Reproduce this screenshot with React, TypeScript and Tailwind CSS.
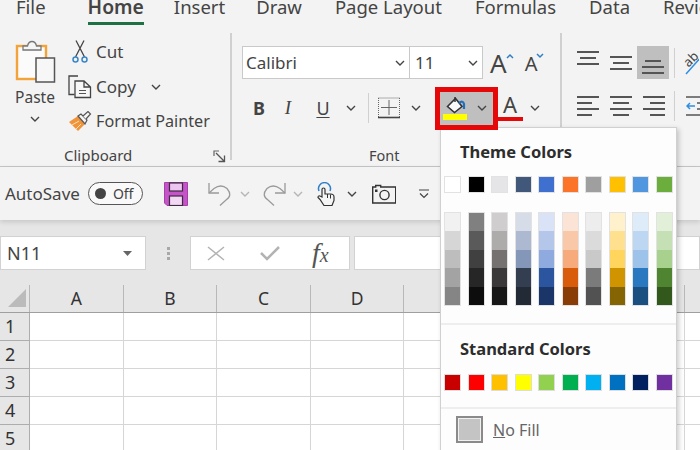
import React from 'react';

const tabs = [
  { label: 'File', cls: 'ml-[16px]' },
  { label: 'Home', cls: 'ml-[42px] text-[19.300px] font-semibold border-b-[3px] border-[#1e7145]' },
  { label: 'Insert', cls: 'ml-[30px]' },
  { label: 'Draw', cls: 'ml-[31px]' },
  { label: 'Page Layout', cls: 'ml-[33px]' },
  { label: 'Formulas', cls: 'ml-[33px]' },
  { label: 'Data', cls: 'ml-[33px]' },
  { label: 'Review', cls: 'ml-[33px]' },
];

const themeTop = ['#ffffff', '#000000', '#e5e5e7', '#42587a', '#3f70cf', '#fc7428', '#a09fa0', '#fec000', '#5097e0', '#6cae3d'];

const themeColumns = [
  ['#f1f1f1', '#d6d6d6', '#bdbdbd', '#a3a3a3', '#858585'],
  ['#808080', '#5a5a5a', '#404040', '#262626', '#0d0d0d'],
  ['#cfcdcd', '#aeabab', '#757171', '#3a3838', '#181717'],
  ['#d6dce8', '#adb9d0', '#8497b8', '#333f50', '#222a35'],
  ['#d9e2f6', '#b4c7ea', '#8faadf', '#2b559f', '#1c3568'],
  ['#fbe3d6', '#f9c8a9', '#f7ab7c', '#d85c0c', '#8a3c06'],
  ['#ededed', '#dbdbdb', '#c9c9c9', '#7b7b7b', '#525252'],
  ['#fff1cc', '#ffe08f', '#ffd55e', '#cf9400', '#856404'],
  ['#deebf9', '#bdd7f2', '#9dc3ea', '#2a78c0', '#1b4f82'],
  ['#e2f0d9', '#c5e0b4', '#a9d18e', '#4f8430', '#32591b'],
];

const standard = ['#c90000', '#ff0000', '#ffc000', '#ffff00', '#92d050', '#00b050', '#00b0f0', '#0070c0', '#002060', '#7030a0'];

const columns = ['A', 'B', 'C', 'D', '', '', '', ''];
const rows = ['1', '2', '3', '4', '5'];

const Chevron = ({ color = '#444444', className = '' }: { color?: string; className?: string }) => (
  <svg width="10" height="6" viewBox="0 0 10 6" className={className}>
    <path d="M1 1l4 4 4-4" fill="none" stroke={color} strokeWidth="1.400" />
  </svg>
);

const PasteIcon = () => (
  <svg width="42" height="44" viewBox="15 39 42 44">
    <rect x="18" y="46" width="29" height="33" fill="#fbfbfb" stroke="#f2a33a" strokeWidth="2.400" />
    <path d="M24 49v-3h4.500q1-4.500 4.500-4.500t4.500 4.500h4.500v4h-18z" fill="#f5f5f5" stroke="#777777" strokeWidth="1.300" />
    <rect x="37" y="58" width="18.500" height="24" fill="#f7f7f7" stroke="#555555" strokeWidth="1.500" />
  </svg>
);

const CutIcon = () => (
  <svg width="16" height="23" viewBox="72 40 16 23">
    <path d="M76 40.500l8.500 16.500M84 40.500l-8.500 16.500" fill="none" stroke="#444444" strokeWidth="1.300" />
    <circle cx="75.500" cy="59.500" r="2.500" fill="none" stroke="#3a86c8" strokeWidth="1.500" />
    <circle cx="84.500" cy="59.500" r="2.500" fill="none" stroke="#3a86c8" strokeWidth="1.500" />
  </svg>
);

const CopyIcon = () => (
  <svg width="24" height="24" viewBox="68 74 24 24">
    <path d="M78 75h-9v18.500h5.500" fill="none" stroke="#444444" strokeWidth="1.300" />
    <path d="M75 80h9l6.500 6v10.500h-15.500zM84 80v6h6.500" fill="#f7f7f7" stroke="#444444" strokeWidth="1.300" />
    <path d="M79 89.500h7M79 92.500h7" stroke="#555555" strokeWidth="1.100" />
  </svg>
);

const PainterIcon = () => (
  <svg width="24" height="21" viewBox="68 110 24 21">
    <path d="M69 121l9-6 7 8-7 7z" fill="#f0943a" />
    <path d="M72 124l7-4M76 128l5-5" stroke="#fbe0c0" strokeWidth="1" />
    <path d="M78 115l3-2 6 6-2 4z" fill="#f5f5f5" stroke="#555555" strokeWidth="1.200" />
    <path d="M83 115l5-4.500 2.500 2.500-4.500 5" fill="#f5f5f5" stroke="#555555" strokeWidth="1.200" />
  </svg>
);

const Launcher = () => (
  <svg width="13" height="13" viewBox="0 0 13 13">
    <path d="M6 1H1v5" fill="none" stroke="#666666" strokeWidth="1.200" />
    <path d="M3 3l8 8M11.500 5.500v6h-6" fill="none" stroke="#555555" strokeWidth="1.300" />
  </svg>
);

const BorderIcon = () => (
  <svg width="22" height="22" viewBox="0 0 22 22">
    <path d="M.5 1h21M.5 1v19M21.500 1v19" fill="none" stroke="#666666" strokeWidth="1" strokeDasharray="1 1" />
    <path d="M3 10.500h16M11 3v15" stroke="#666666" strokeWidth="1" />
    <path d="M0 20.500h22" stroke="#444444" strokeWidth="1.600" />
  </svg>
);

const FillIcon = () => (
  <svg width="24" height="24" viewBox="0 0 24 24">
    <path d="M4.500 10.500L12.500 2.500 19 10.500 11.500 16.500z" fill="#fafafa" stroke="#333333" strokeWidth="1.600" />
    <path d="M12 1v5" stroke="#333333" strokeWidth="1.500" />
    <path d="M16 7q4-3 5 1v5" fill="none" stroke="#1f6fc0" strokeWidth="2.200" />
    <rect x="0" y="18" width="24" height="6" fill="#ffff00" />
  </svg>
);

const AlignLines = ({ widths }: { widths: string[] }) => (
  <div className="flex w-[22px] flex-col gap-[4px]">
    {widths.map((w, i) => (
      <div key={i} className={`h-[2px] bg-[#555555] ${w}`} />
    ))}
  </div>
);

const SaveIcon = () => (
  <svg width="24" height="24" viewBox="0 0 24 24">
    <path d="M.5.500h23v23H3L.5 21z" fill="#c554c8" stroke="#a93fac" />
    <rect x="5.500" y="1" width="13" height="8" fill="#ecc6ee" stroke="#3f2a44" strokeWidth="1.200" />
    <rect x="5.500" y="14" width="13" height="9.500" fill="#f3d8f4" stroke="#3f2a44" strokeWidth="1.200" />
  </svg>
);

const UndoIcon = () => (
  <svg width="24" height="24" viewBox="0 0 24 24">
    <path d="M1 1v10h10" fill="none" stroke="#9a9a9a" strokeWidth="1.300" />
    <path d="M1 11L6 6.500q7-5 13 0 6 7-1 11.500l-6 5.500" fill="none" stroke="#9a9a9a" strokeWidth="1.300" />
  </svg>
);

const RedoIcon = () => (
  <svg width="24" height="24" viewBox="0 0 24 24">
    <path d="M23 1v10H13" fill="none" stroke="#9a9a9a" strokeWidth="1.300" />
    <path d="M23 11l-5-4.500q-7-5-13 0-6 7 1 11.500l6 5.500" fill="none" stroke="#9a9a9a" strokeWidth="1.300" />
  </svg>
);

const TouchIcon = () => (
  <svg width="18" height="24" viewBox="0 0 18 24">
    <path d="M2 9a6 6 0 1 1 11 0" fill="none" stroke="#2f7fc8" strokeWidth="1.500" />
    <path d="M5 15V7.500a1.500 1.500 0 0 1 3 0V12h5.500q3.500 0 3.500 3v3.500l-2 5H7l-4-6-2-2q0-2 2-1.500z" fill="#f5f5f5" stroke="#333333" strokeWidth="1.200" />
    <path d="M10.500 12v4M13.500 12.500v4" stroke="#333333" strokeWidth="1" />
  </svg>
);

const CameraIcon = () => (
  <svg width="24" height="20" viewBox="0 0 24 20">
    <path d="M.7 3h3V1.500h5V3h15v16H.7z" fill="none" stroke="#333333" strokeWidth="1.400" />
    <circle cx="12.500" cy="11" r="4.600" fill="none" stroke="#333333" strokeWidth="1.400" />
    <rect x="3" y="5.500" width="2.500" height="2.500" fill="#333333" />
  </svg>
);

const FxIcon = () => (
  <span className="font-['Liberation_Serif',serif] text-[28px] leading-none text-[#555555] italic">
    f<span className="text-[20px]">x</span>
  </span>
);

const Swatch = ({ color, border = 'border-[#e2e2e2]' }: { color: string; border?: string }) => (
  <div className={`h-[17px] w-[17px] border ${border}`} style={{ backgroundColor: color }} />
);

export default function App() {
  return (
    <div className="relative flex h-[450px] w-[700px] flex-col overflow-hidden bg-[#f3f3f3] font-['Noto_Sans',sans-serif] text-[#444444]">
      {/* tab strip, cut off by the top edge of the shot */}
      <div className="flex h-[28px] shrink-0 items-start overflow-hidden text-[18.500px] leading-[14px] whitespace-nowrap">
        {tabs.map((t) => (
          <div key={t.label} className={`h-[25px] shrink-0 ${t.cls}`}>
            {t.label}
          </div>
        ))}
      </div>

      {/* ribbon */}
      <div className="flex h-[139px] shrink-0 border-b border-[#c6c6c6]">
        {/* clipboard */}
        <div className="flex w-[230px] shrink-0 flex-col">
          <div className="flex h-[112px]">
            <div className="ml-[14px] flex w-[42px] flex-col items-center pt-[11px]">
              <PasteIcon />
              <div className="mt-[3px] text-[15.500px] leading-[22px]">Paste</div>
              <Chevron className="mt-[8px]" />
            </div>
            <div className="ml-[12px] flex flex-col pt-[6px] text-[17px]">
              <div className="flex h-[35px] items-center">
                <div className="ml-[4px] w-[24px]">
                  <CutIcon />
                </div>
                <span>Cut</span>
              </div>
              <div className="flex h-[35px] items-center">
                <div className="w-[28px]">
                  <CopyIcon />
                </div>
                <span>Copy</span>
                <Chevron className="ml-[15px]" />
              </div>
              <div className="flex h-[35px] items-center">
                <div className="w-[28px]">
                  <PainterIcon />
                </div>
                <span className="text-[16.200px]">Format Painter</span>
              </div>
            </div>
          </div>
          <div className="flex flex-1 items-start">
            <div className="mt-[5px] ml-[64px] w-[66px] text-center text-[15px] leading-[20px]">Clipboard</div>
            <div className="mt-[10px] ml-[83px]">
              <Launcher />
            </div>
          </div>
        </div>
        <div className="mt-[5px] mb-[6px] w-[2px] shrink-0 bg-[#d0d0d0]" />

        {/* font */}
        <div className="flex w-[328px] shrink-0 flex-col pl-[10px]">
          <div className="mt-[18px] flex h-[33px] items-center">
            <div className="flex h-[33px] w-[168px] items-center justify-between border border-[#c9c9c9] bg-white pr-[4px] pl-[3px] text-[17px]">
              <span>Calibri</span>
              <Chevron />
            </div>
            <div className="-ml-px flex h-[33px] w-[74px] items-center justify-between border border-[#c9c9c9] bg-white pr-[4px] pl-[5px] text-[17px]">
              <span>11</span>
              <Chevron />
            </div>
            <div className="relative ml-[7px] text-[26px] leading-none">
              A
              <svg width="8" height="6" viewBox="0 0 8 6" className="absolute top-[3px] -right-[7px]">
                <path d="M1 5l3-3 3 3" fill="none" stroke="#2f7fc8" strokeWidth="1.500" />
              </svg>
            </div>
            <div className="relative mt-[3px] ml-[18px] text-[20px] leading-none">
              A
              <svg width="8" height="6" viewBox="0 0 8 6" className="absolute -top-[1px] -right-[7px]">
                <path d="M1 1l3 3 3-3" fill="none" stroke="#2f7fc8" strokeWidth="1.500" />
              </svg>
            </div>
          </div>
          <div className="mt-[8px] flex h-[42px] items-center">
            <div className="flex w-[34px] justify-center text-[18px] font-bold">B</div>
            <div className="flex w-[24px] justify-center font-['Liberation_Serif',serif] text-[19px] italic">I</div>
            <div className="flex w-[46px] justify-center text-[18px] underline underline-offset-2">U</div>
            <Chevron />
            <div className="ml-[12px] h-[30px] w-px bg-[#d0d0d0]" />
            <div className="ml-[9px]">
              <BorderIcon />
            </div>
            <Chevron className="ml-[11px]" />
            <div className="relative z-20 ml-[14px] flex h-[43px] w-[63px] shrink-0 items-center border-[5px] border-[#e60808] bg-[#bfbfbf] pl-[3px]">
              <FillIcon />
              <Chevron className="ml-[10px]" />
            </div>
            <div className="flex h-[42px] w-[24px] flex-col items-center pt-[5px]">
              <span className="text-[22px] leading-[24px]">A</span>
              <div className="mt-[1px] h-[4px] w-[25px] bg-[#e60808]" />
            </div>
            <Chevron className="ml-[8px]" />
          </div>
          <div className="mt-[16px] ml-[127px] text-[14.500px] leading-[20px]">Font</div>
        </div>
        <div className="mt-[5px] mb-[26px] w-[2px] shrink-0 bg-[#d0d0d0]" />

        {/* alignment */}
        <div className="flex flex-1 flex-col pl-[15px]">
          <div className="mt-[18px] flex h-[33px] items-center">
            <div className="mb-[9px]">
              <AlignLines widths={['w-[22px]', 'ml-[3px] w-[16px]', 'w-[22px]']} />
            </div>
            <div className="mt-[1px] ml-[11px]">
              <AlignLines widths={['w-[22px]', 'ml-[3px] w-[16px]', 'w-[22px]']} />
            </div>
            <div className="ml-[5px] flex h-[33px] w-[32px] items-end justify-center bg-[#bfbfbf] pb-[5px]">
              <AlignLines widths={['ml-[3px] w-[16px]', 'w-[22px]', 'w-[22px]']} />
            </div>
            <div className="ml-[5px] h-[30px] w-px bg-[#d0d0d0]" />
            <svg width="15" height="26" viewBox="0 0 15 26" className="ml-[9px]">
              <path d="M2 24L18 6" stroke="#2f8fe0" strokeWidth="1.500" />
              <text x="1" y="15" fontSize="13" fill="#444444" transform="rotate(-45 6 12)">ab</text>
            </svg>
          </div>
          <div className="mt-[15px] flex h-[24px] items-center">
            <AlignLines widths={['w-[22px]', 'w-[15px]', 'w-[22px]', 'w-[15px]']} />
            <div className="ml-[11px]">
              <AlignLines widths={['w-[22px]', 'ml-[3px] w-[16px]', 'w-[22px]', 'ml-[3px] w-[16px]']} />
            </div>
            <div className="ml-[11px]">
              <AlignLines widths={['w-[22px]', 'ml-[7px] w-[15px]', 'w-[22px]', 'ml-[7px] w-[15px]']} />
            </div>
            <div className="ml-[9px] h-[30px] w-px bg-[#d0d0d0]" />
            <svg width="15" height="22" viewBox="0 0 15 22" className="ml-[11px]">
              <path d="M9 11H1M4 8l-3 3 3 3" fill="none" stroke="#2f8fe0" strokeWidth="1.500" />
              <path d="M0 2h15M11 8h4M11 14h4M0 20h15" stroke="#555555" strokeWidth="1.500" />
            </svg>
          </div>
        </div>
      </div>

      {/* quick access toolbar */}
      <div className="relative z-[1] flex h-[53px] shrink-0 items-center bg-[#f3f3f3] pl-[5px] shadow-[0_2px_5px_rgba(0,0,0,0.14)]">
        <span className="text-[17px]">AutoSave</span>
        <div className="ml-[8px] flex h-[23px] w-[55px] items-center rounded-full border border-[#555555] bg-[#f9f9f9] pl-[6px]">
          <div className="h-[11px] w-[11px] rounded-full bg-[#444444]" />
          <span className="ml-[7px] text-[14px]">Off</span>
        </div>
        <div className="ml-[21px]">
          <SaveIcon />
        </div>
        <div className="ml-[20px]">
          <UndoIcon />
        </div>
        <Chevron color="#b5b5b5" className="ml-[8px]" />
        <div className="ml-[12px]">
          <RedoIcon />
        </div>
        <Chevron color="#b5b5b5" className="ml-[7px]" />
        <div className="ml-[14px]">
          <TouchIcon />
        </div>
        <Chevron className="ml-[12px]" />
        <div className="ml-[15px]">
          <CameraIcon />
        </div>
        <svg width="10" height="10" viewBox="0 0 10 10" className="ml-[23px]">
          <path d="M0 1h10M1 4.500l4 4 4-4" fill="none" stroke="#444444" strokeWidth="1.200" />
        </svg>
      </div>

      {/* formula bar */}
      <div className="flex h-[65px] shrink-0 items-start bg-[#e6e6e6] pt-[16px]">
        <div className="flex h-[34px] w-[146px] items-center justify-between border border-[#d2d2d2] bg-white pr-[13px] pl-[6px] text-[18px]">
          <span>N11</span>
          <svg width="9" height="5" viewBox="0 0 9 5">
            <path d="M0 0h9L4.500 5z" fill="#666666" />
          </svg>
        </div>
        <div className="ml-[21px] flex h-[34px] flex-col justify-center gap-[2px]">
          <div className="h-[3px] w-[3px] bg-[#a8a8a8]" />
          <div className="h-[3px] w-[3px] bg-[#a8a8a8]" />
          <div className="h-[3px] w-[3px] bg-[#a8a8a8]" />
        </div>
        <div className="ml-[20px] flex h-[34px] w-[160px] items-center border border-[#d2d2d2] bg-white pl-[16px]">
          <svg width="18" height="15" viewBox="0 0 18 15">
            <path d="M1 1l16 13M17 1L1 14" stroke="#b3b3b3" strokeWidth="1.500" />
          </svg>
          <svg width="20" height="16" viewBox="0 0 20 16" className="ml-[35px]">
            <path d="M1 8l6 6L19 2" fill="none" stroke="#b3b3b3" strokeWidth="2.500" />
          </svg>
          <div className="ml-[32px]">
            <FxIcon />
          </div>
        </div>
        <div className="ml-[4px] h-[34px] flex-1 border border-[#d2d2d2] bg-white" />
      </div>

      {/* sheet */}
      <div className="flex h-[28px] shrink-0 border-b border-[#9f9f9f] bg-[#e6e6e6]">
        <div className="flex w-[30px] shrink-0 items-end border-r border-[#b8b8b8] pb-[5px] pl-[8px]">
          <svg width="18" height="18" viewBox="0 0 18 18">
            <path d="M18 0v18H0z" fill="#bbbbbb" />
          </svg>
        </div>
        {columns.map((c, i) => (
          <div key={i} className="flex w-[93.600px] shrink-0 items-center justify-center border-r border-[#b8b8b8] text-[17.500px] text-[#333333]">
            {c}
          </div>
        ))}
      </div>
      {rows.map((r) => (
        <div key={r} className="flex h-[28px] shrink-0 bg-white">
          <div className="flex w-[30px] shrink-0 items-center border-r border-b border-[#adadad] bg-[#e6e6e6] pl-[5px] text-[18px] text-[#333333]">
            {r}
          </div>
          {columns.map((_, i) => (
            <div key={i} className="w-[93.600px] shrink-0 border-r border-b border-[#d6d6d6]" />
          ))}
        </div>
      ))}

      {/* fill colour dropdown */}
      <div className="absolute top-[127px] left-[440px] z-10 flex h-[340px] w-[237px] flex-col border border-[#d0d0d0] bg-[#fdfdfd] pl-[3px] shadow-[2px_2px_5px_rgba(0,0,0,0.2)]">
        <div className="mt-[12px] ml-[16px] text-[16.500px] leading-[24px] font-bold text-[#2d2d2d]">Theme Colors</div>
        <div className="mt-[12px] flex gap-[6.500px]">
          {themeTop.map((c) => (
            <Swatch key={c} color={c} />
          ))}
        </div>
        <div className="mt-[19px] flex gap-[6.500px]">
          {themeColumns.map((col, i) => (
            <div key={i} className="flex w-[17px] flex-col border border-[#e2e2e2]">
              {col.map((c) => (
                <div key={c} className="h-[18.400px]" style={{ backgroundColor: c }} />
              ))}
            </div>
          ))}
        </div>
        <div className="mt-[17px] -ml-[3px] h-[2px] w-[235px] bg-[#eeeeee]" />
        <div className="mt-[12px] ml-[16px] text-[16.500px] leading-[24px] font-bold text-[#2d2d2d]">Standard Colors</div>
        <div className="mt-[13px] flex gap-[6.500px]">
          {standard.map((c) => (
            <Swatch key={c} color={c} border="border-[#dddddd]" />
          ))}
        </div>
        <div className="mt-[16px] -ml-[3px] h-[2px] w-[235px] bg-[#eeeeee]" />
        <div className="mt-[7px] ml-[12px] flex items-center">
          <div className="h-[27px] w-[27px] border-2 border-[#8a8a8a] bg-[#c4c4c4] outline-1 -outline-offset-3 outline-[#f0f0f0]" />
          <span className="mt-[2px] ml-[10px] text-[16px] text-[#666666]">
            <span className="underline">N</span>o Fill
          </span>
        </div>
      </div>
    </div>
  );
}
